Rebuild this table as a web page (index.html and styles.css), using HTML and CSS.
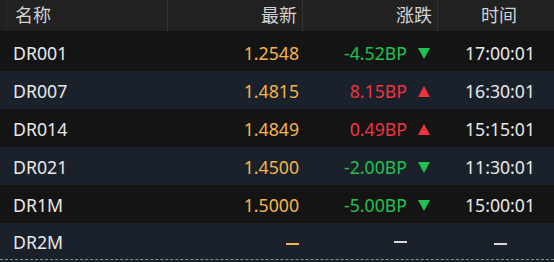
FILE: index.html
```html
<!DOCTYPE html>
<html lang="zh">
<head>
<meta charset="utf-8">
<link rel="stylesheet" href="styles.css">
</head>
<body>
<div class="board">
  <div class="row head">
    <div class="c name"><span class="pre"></span>名称</div>
    <div class="c last">最新</div>
    <div class="c chg">涨跌</div>
    <div class="c time">时间</div>
  </div>
  <div class="row odd">
    <div class="c name">DR001</div>
    <div class="c last y">1.2548</div>
    <div class="c chg g">-4.52BP<svg class="tri" viewBox="0 0 12 11"><path d="M0 0H12L6 11Z"/></svg></div>
    <div class="c time">17:00:01</div>
  </div>
  <div class="row even">
    <div class="c name">DR007</div>
    <div class="c last y">1.4815</div>
    <div class="c chg r">8.15BP<svg class="tri" viewBox="0 0 12 11"><path d="M6 0L12 11H0Z"/></svg></div>
    <div class="c time">16:30:01</div>
  </div>
  <div class="row odd">
    <div class="c name">DR014</div>
    <div class="c last y">1.4849</div>
    <div class="c chg r">0.49BP<svg class="tri" viewBox="0 0 12 11"><path d="M6 0L12 11H0Z"/></svg></div>
    <div class="c time">15:15:01</div>
  </div>
  <div class="row even">
    <div class="c name">DR021</div>
    <div class="c last y">1.4500</div>
    <div class="c chg g">-2.00BP<svg class="tri" viewBox="0 0 12 11"><path d="M0 0H12L6 11Z"/></svg></div>
    <div class="c time">11:30:01</div>
  </div>
  <div class="row odd">
    <div class="c name">DR1M</div>
    <div class="c last y">1.5000</div>
    <div class="c chg g">-5.00BP<svg class="tri" viewBox="0 0 12 11"><path d="M0 0H12L6 11Z"/></svg></div>
    <div class="c time">15:00:01</div>
  </div>
  <div class="row even lastrow">
    <div class="c name">DR2M</div>
    <div class="c last"><span class="dash dy"></span></div>
    <div class="c chg"><span class="dash dw dchg"></span></div>
    <div class="c time"><span class="dash dw"></span></div>
  </div>
</div>
</body>
</html>
```
FILE: styles.css
```css
* { box-sizing: border-box; }
html, body { margin: 0; padding: 0; background: #1b212b; }
body {
  width: 554px;
  height: 262px;
  overflow: hidden;
  font-family: "Noto Sans", "Noto Sans CJK SC", sans-serif;
  font-size: 17.7px;
  color: #e8e8e8;
}
.board { display: flex; flex-direction: column; }
.row {
  display: grid;
  grid-template-columns: 168px 135px 135px 116px;
  height: 38px;
  padding-top: 2px;
  align-items: center;
}
.head {
  height: 33px;
  padding-top: 0;
  background: #212121;
  border-bottom: 2px solid #121212;
  color: #d2d2d2;
  align-items: stretch;
}
.head .c {
  display: flex;
  align-items: center;
  border-right: 1px solid #333;
  font-family: "Noto Sans CJK SC", sans-serif;
  font-size: 18px;
  padding-bottom: 3px;
}
.head .c:last-child { border-right: none; }
.head .name { padding-left: 0; }
.head .pre { width: 7px; align-self: stretch; border-right: 1px solid #2c2c2c; margin-right: 8px; margin-bottom: -3px; }
.head .last, .head .chg { justify-content: flex-end; }
.head .last { padding-right: 5px; }
.head .chg { padding-right: 5px; }
.head .time { justify-content: center; padding-left: 6px; }
.odd { background: #141414; }
.even { background: #1b212b; }
.c { white-space: nowrap; }
.name { padding-left: 13px; }
.last { text-align: right; padding-right: 4px; }
.chg { display: flex; justify-content: flex-end; align-items: center; padding-right: 8px; }
.time { text-align: center; padding-left: 8px; }
.y { color: #f4b447; }
.g { color: #1fc251; }
.r { color: #f2333b; }
.tri { width: 12px; height: 11px; margin-left: 11px; fill: currentColor; }
.lastrow { height: 37px; border-bottom: 1px dashed #8a8f96; }
.dash { display: inline-block; width: 13px; height: 2px; vertical-align: middle; }
.dy { background: #f4b447; }
.dw { background: #d8d8d8; }
.dchg { margin-right: 23px; }
```
